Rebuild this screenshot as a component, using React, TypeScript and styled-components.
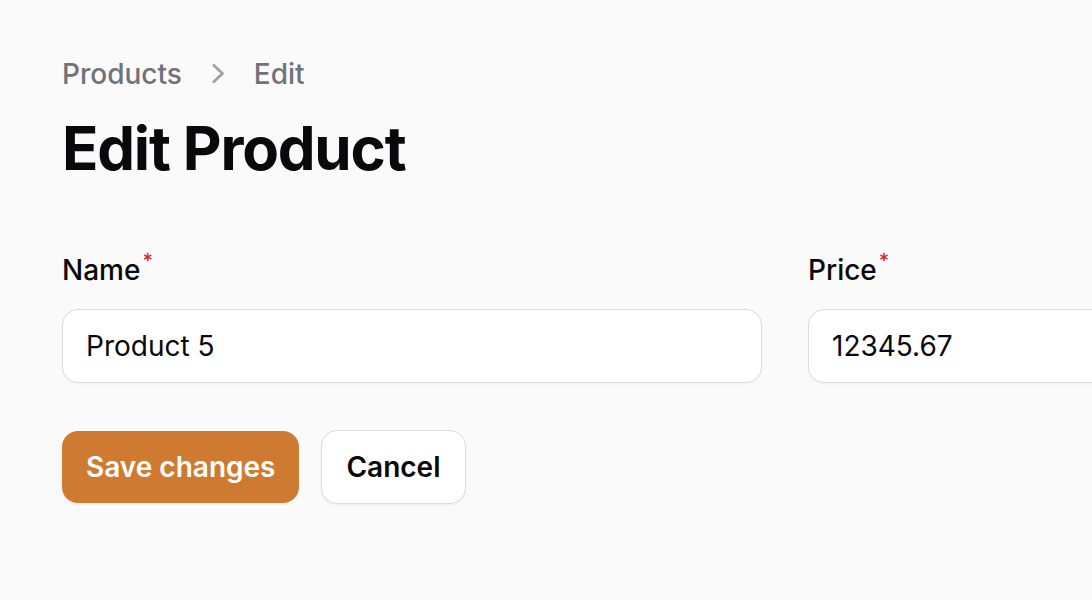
import React from "react";
import styled, { createGlobalStyle } from "styled-components";

const Global = createGlobalStyle`
  html, body {
    margin: 0;
    padding: 0;
    background: #fafafa;
    overflow: hidden;
  }
  body {
    font-family: Inter, "Noto Sans", sans-serif;
    color: #09090b;
    -webkit-font-smoothing: antialiased;
  }
`;

const Page = styled.main`
  padding: 54px 0 0 62px;
  width: 100vw;
  height: 100vh;
  overflow: hidden;
  box-sizing: border-box;
`;

const Crumbs = styled.nav`
  display: flex;
  align-items: center;
  gap: 16px;
  height: 40px;
`;

const Crumb = styled.span<{ $current?: boolean }>`
  font-size: 28px;
  line-height: 40px;
  font-weight: 500;
  color: #71717a;
`;

const Chevron = styled.svg`
  width: 40px;
  height: 40px;
  color: #a1a1aa;
  display: block;
`;

const Heading = styled.h1`
  margin: 18px 0 0;
  font-size: 60px;
  line-height: 72px;
  font-weight: 700;
  letter-spacing: -1.2px;
  color: #09090b;
`;

const Form = styled.form`
  margin-top: 66px;
`;

const Fields = styled.div`
  display: grid;
  grid-template-columns: 700px 700px;
  column-gap: 46px;
`;

const Field = styled.div`
  display: flex;
  flex-direction: column;
  gap: 19px;
`;

const Label = styled.label`
  font-size: 28px;
  line-height: 40px;
  font-weight: 500;
  color: #09090b;
`;

const Required = styled.sup`
  color: #dc2626;
  font-size: 20px;
  font-weight: 500;
  line-height: 0;
  margin-left: 2px;
  position: relative;
  top: -2px;
`;

const Input = styled.input`
  box-sizing: border-box;
  height: 74px;
  width: 100%;
  border: 1px solid #dcdcdc;
  border-radius: 16px;
  background: #ffffff;
  padding: 0 23px;
  font-family: Inter, "Noto Sans", sans-serif;
  font-size: 28px;
  color: #09090b;
  outline: none;
  box-shadow: 0 1px 2px rgba(0, 0, 0, 0.04);
`;

const Actions = styled.div`
  margin-top: 47px;
  display: flex;
  align-items: center;
  gap: 22px;
`;

const Button = styled.button<{ $primary?: boolean }>`
  box-sizing: border-box;
  height: ${(p) => (p.$primary ? "72px" : "74px")};
  padding: 0 24px;
  border-radius: 16px;
  font-family: Inter, "Noto Sans", sans-serif;
  font-size: 28px;
  line-height: 40px;
  font-weight: 600;
  cursor: pointer;
  border: ${(p) => (p.$primary ? "none" : "1px solid #dcdcdc")};
  background: ${(p) => (p.$primary ? "#ce7b31" : "#ffffff")};
  color: ${(p) => (p.$primary ? "#ffffff" : "#09090b")};
  box-shadow: 0 1px 2px rgba(0, 0, 0, 0.06);
`;

export default function App() {
  return (
    <>
      <Global />
      <Page>
        <Crumbs>
          <Crumb>Products</Crumb>
          <Chevron viewBox="0 0 40 40" fill="none">
            <path
              d="M15.8 11.2 L24.5 19.5 L15.8 27.8"
              stroke="currentColor"
              strokeWidth="2.8"
              strokeLinecap="round"
              strokeLinejoin="round"
            />
          </Chevron>
          <Crumb $current>Edit</Crumb>
        </Crumbs>
        <Heading>Edit Product</Heading>
        <Form onSubmit={(e) => e.preventDefault()}>
          <Fields>
            <Field>
              <Label>
                Name<Required>*</Required>
              </Label>
              <Input defaultValue="Product 5" />
            </Field>
            <Field>
              <Label>
                Price<Required>*</Required>
              </Label>
              <Input defaultValue="12345.67" />
            </Field>
          </Fields>
          <Actions>
            <Button $primary type="submit">Save changes</Button>
            <Button type="button">Cancel</Button>
          </Actions>
        </Form>
      </Page>
    </>
  );
}
